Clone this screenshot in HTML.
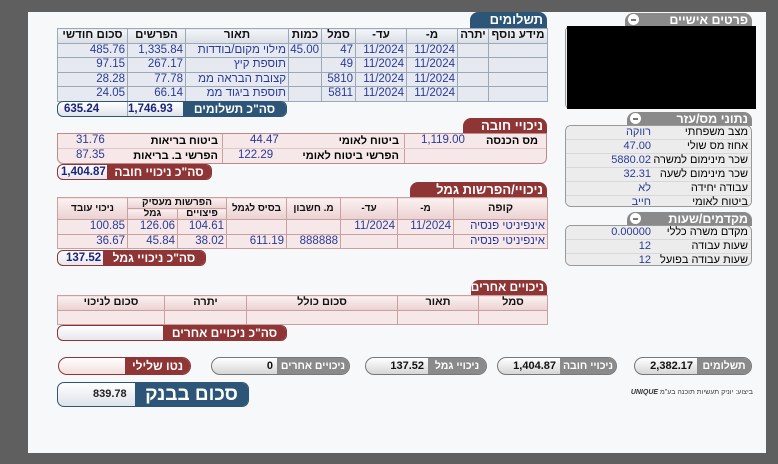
<!DOCTYPE html>
<html dir="ltr"><head><meta charset="utf-8">
<style>
*{margin:0;padding:0;box-sizing:border-box}
body{width:778px;height:464px;background:#5f5f5f;position:relative;overflow:hidden;font-family:"Liberation Sans",Arial,sans-serif;font-size:11px}
.pg{position:absolute;left:28px;top:12px;width:738px;height:441px;background:#f7f8fa}
.a{position:absolute;white-space:nowrap}
.tab{position:absolute;color:#fff;font-weight:bold;font-size:13px;line-height:15px;text-align:right;padding-right:4px;border-radius:8px 8px 0 0;direction:rtl;white-space:nowrap;overflow:hidden}
.blue{background:#2c5577}.red{background:#8f3535}.gray{background:#8a8a8a}
table{position:absolute;border-collapse:collapse;direction:rtl;table-layout:fixed}
td{border:1px solid #9aa8b8;height:14.5px;padding:0 2px;white-space:nowrap;overflow:hidden;font-size:11.5px;line-height:13px}
.bt td{background:#e6eaf0;color:#2a3a9a;text-align:right}
.bt tr:first-child td{background:linear-gradient(#f4f6f8,#d9dee5);color:#111;font-weight:bold;text-align:center}
.rt td{border-color:#c8a0a0;background:#f6e8e8;color:#2a3a9a;text-align:right}
.rt tr.h td{background:linear-gradient(#fbf1f1,#ebd1d1);color:#111;font-weight:bold;text-align:center;font-size:10px}
.box{position:absolute;border-radius:6px;overflow:hidden}
.num{text-align:left;color:#1a237e;font-weight:bold}
.gt td{border:none;border-bottom:1px solid #d8d8d8;background:#ececec;height:13.6px;padding:0 3px;font-size:11px}
.pill{position:absolute;height:18px;border:1px solid #777;border-radius:9px;background:linear-gradient(#fff,#d6d6d6);overflow:hidden}
.pill .l{position:absolute;right:0;top:0;bottom:0;background:#8a8a8a;color:#fff;font-weight:bold;font-size:10.5px;line-height:17px;padding:0 3px;direction:rtl;white-space:nowrap;text-align:center}
.pill .v{position:absolute;top:0;line-height:17px;font-weight:bold;font-size:11px;color:#111;white-space:nowrap}
.mn{display:inline-block;width:11px;height:11px;border-radius:50%;background:#fff;vertical-align:-1px;position:relative}
.mn:after{content:"";position:absolute;left:3px;top:5px;width:5px;height:1.5px;background:#777}
</style></head><body>
<div class="pg"></div>

<!-- payments -->
<div class="tab blue" style="left:470px;top:12px;width:77px;height:16px">תשלומים</div>
<table class="bt" style="left:57px;top:28px;width:490px">
<colgroup><col style="width:59px"><col style="width:31px"><col style="width:51px"><col style="width:51px"><col style="width:34px"><col style="width:33px"><col style="width:103px"><col style="width:58px"><col style="width:70px"></colgroup>
<tr><td>מידע נוסף</td><td>יתרה</td><td>מ-</td><td>עד-</td><td>סמל</td><td>כמות</td><td>תאור</td><td>הפרשים</td><td>סכום חודשי</td></tr>
<tr><td></td><td></td><td>11/2024</td><td>11/2024</td><td>47</td><td>45.00</td><td>מילוי מקום/בודדות</td><td>1,335.84</td><td>485.76</td></tr>
<tr><td></td><td></td><td>11/2024</td><td>11/2024</td><td>49</td><td></td><td>תוספת קיץ</td><td>267.17</td><td>97.15</td></tr>
<tr><td></td><td></td><td>11/2024</td><td>11/2024</td><td>5810</td><td></td><td>קצובת הבראה ממ</td><td>77.78</td><td>28.28</td></tr>
<tr><td></td><td></td><td>11/2024</td><td>11/2024</td><td>5811</td><td></td><td>תוספת ביגוד ממ</td><td>66.14</td><td>24.05</td></tr>
</table>
<div class="box" style="left:57px;top:101px;width:230px;height:16px;border:1px solid #2c5577;background:linear-gradient(#fff,#dfe4ea)">
<div class="a blue" style="right:0;top:0;width:103px;height:16px;color:#fff;font-weight:bold;font-size:12px;line-height:15px;text-align:center;direction:rtl">סה"כ תשלומים</div>
<div class="a num" style="left:70px;top:1px;font-size:11.5px">1,746.93</div>
<div class="a num" style="left:6px;top:1px;font-size:11.5px">635.24</div>
<div class="a" style="left:69px;top:0;width:1px;height:16px;background:#9aa8b8"></div>
</div>

<!-- mandatory -->
<div class="tab red" style="left:463px;top:118px;width:84px;height:16px">ניכויי חובה</div>
<div class="box" style="left:57px;top:133px;width:490px;height:31px;border:1px solid #c08a8a;background:#f6e8e8;border-radius:0 0 6px 6px;direction:rtl">
<div class="a" style="left:164px;top:0;width:1px;height:30px;background:#c8a0a0"></div>
<div class="a" style="left:346px;top:0;width:1px;height:30px;background:#c8a0a0"></div>
<div class="a" style="left:0;top:14px;width:490px;height:1px;background:#e0c8c8"></div>
<div class="a" style="right:8px;top:1px;font-weight:bold">מס הכנסה</div>
<div class="a" style="left:363px;top:0;color:#2a3a9a;font-size:11.5px">1,119.00</div>
<div class="a" style="right:147px;top:1px;font-weight:bold">ביטוח לאומי</div>
<div class="a" style="left:192px;top:0;color:#2a3a9a;font-size:11.5px">44.47</div>
<div class="a" style="right:147px;top:16px;font-weight:bold">הפרשי ביטוח לאומי</div>
<div class="a" style="left:180px;top:15px;color:#2a3a9a;font-size:11.5px">122.29</div>
<div class="a" style="right:328px;top:1px;font-weight:bold">ביטוח בריאות</div>
<div class="a" style="left:18px;top:0;color:#2a3a9a;font-size:11.5px">31.76</div>
<div class="a" style="right:328px;top:16px;font-weight:bold">הפרשי ב. בריאות</div>
<div class="a" style="left:18px;top:15px;color:#2a3a9a;font-size:11.5px">87.35</div>
</div>
<div class="box" style="left:57px;top:164px;width:155px;height:16px;border:1px solid #8f3535;background:linear-gradient(#fff,#e6e6ee)">
<div class="a red" style="right:0;top:0;width:104px;height:16px;color:#fff;font-weight:bold;font-size:12px;line-height:15px;text-align:center;direction:rtl">סה"כ ניכויי חובה</div>
<div class="a num" style="left:3px;top:1px;font-size:11.5px">1,404.87</div>
</div>

<!-- gemel -->
<div class="tab red" style="left:410px;top:182px;width:137px;height:16px">ניכויי/הפרשות גמל</div>
<table class="rt" style="left:57px;top:197px;width:490px">
<colgroup><col style="width:94px"><col style="width:56px"><col style="width:57px"><col style="width:54px"><col style="width:60px"><col style="width:49px"><col style="width:50px"><col style="width:70px"></colgroup>
<tr class="h"><td rowspan="2" style="font-size:11px">קופה</td><td rowspan="2">מ-</td><td rowspan="2">עד-</td><td rowspan="2">מ. חשבון</td><td rowspan="2">בסיס לגמל</td><td colspan="2" style="height:10px;line-height:10px">הפרשות מעסיק</td><td rowspan="2">ניכוי עובד</td></tr>
<tr class="h"><td style="height:10px;line-height:10px">פיצויים</td><td style="height:10px;line-height:10px">גמל</td></tr>
<tr><td>אינפיניטי פנסיה</td><td>11/2024</td><td>11/2024</td><td></td><td></td><td>104.61</td><td>126.06</td><td>100.85</td></tr>
<tr><td>אינפיניטי פנסיה</td><td></td><td></td><td>888888</td><td>611.19</td><td>38.02</td><td>45.84</td><td>36.67</td></tr>
</table>
<div class="box" style="left:57px;top:250px;width:149px;height:16px;border:1px solid #8f3535;background:linear-gradient(#fff,#e6e6ee)">
<div class="a red" style="right:0;top:0;width:102px;height:16px;color:#fff;font-weight:bold;font-size:12px;line-height:15px;text-align:center;direction:rtl">סה"כ ניכויי גמל</div>
<div class="a num" style="left:8px;top:1px;font-size:11.5px">137.52</div>
</div>

<!-- others -->
<div class="tab red" style="left:471px;top:280px;width:76px;height:16px;font-size:12px;padding-right:3px">ניכויים אחרים</div>
<table class="rt" style="left:57px;top:295px;width:490px">
<colgroup><col style="width:69px"><col style="width:81px"><col style="width:151px"><col style="width:82px"><col style="width:107px"></colgroup>
<tr class="h"><td style="font-size:11px">סמל</td><td style="font-size:11px">תאור</td><td style="font-size:11px">סכום כולל</td><td style="font-size:11px">יתרה</td><td style="font-size:11px">סכום לניכוי</td></tr>
<tr><td></td><td></td><td></td><td></td><td></td></tr>
</table>
<div class="box" style="left:57px;top:325px;width:230px;height:16px;border:1px solid #8f3535;background:linear-gradient(#fff,#e6e6ee)">
<div class="a red" style="right:0;top:0;width:123px;height:16px;color:#fff;font-weight:bold;font-size:12px;line-height:15px;text-align:center;direction:rtl">סה"כ ניכויים אחרים</div>
</div>

<!-- right column -->
<div class="tab gray" style="left:625px;top:13px;width:127px;height:14px;line-height:14px;font-size:12.5px;padding-left:3px"><span class="mn" style="position:absolute;left:3px;top:1px"></span>פרטים אישיים</div>
<div class="a" style="left:565px;top:26px;width:188px;height:83px;border:1px solid #999;border-radius:5px;background:#ececec"></div>
<div class="a" style="left:567px;top:26px;width:189px;height:83px;background:#000"></div>

<div class="tab gray" style="left:627px;top:112px;width:125px;height:14px;line-height:14px;font-size:12.5px"><span class="mn" style="position:absolute;left:3px;top:1px"></span>נתוני מס/עזר</div>
<div class="box" style="left:565px;top:125px;width:187px;height:82px;border:1px solid #999;background:#ececec">
<table class="gt" style="left:0;top:0;width:185px;position:absolute">
<colgroup><col style="width:97px"><col style="width:88px"></colgroup>
<tr><td>מצב משפחתי</td><td style="color:#2a3a9a">רווקה</td></tr>
<tr><td>אחוז מס שולי</td><td style="color:#2a3a9a">47.00</td></tr>
<tr><td>שכר מינימום למשרה</td><td style="color:#2a3a9a">5880.02</td></tr>
<tr><td>שכר מינימום לשעה</td><td style="color:#2a3a9a">32.31</td></tr>
<tr><td>עבודה יחידה</td><td style="color:#2a3a9a">לא</td></tr>
<tr><td style="border:none">ביטוח לאומי</td><td style="border:none;color:#2a3a9a">חייב</td></tr>
</table></div>

<div class="tab gray" style="left:627px;top:212px;width:125px;height:14px;line-height:14px;font-size:12.5px"><span class="mn" style="position:absolute;left:3px;top:1px"></span>מקדמים/שעות</div>
<div class="box" style="left:565px;top:225px;width:187px;height:41px;border:1px solid #999;background:#ececec">
<table class="gt" style="left:0;top:0;width:185px;position:absolute">
<colgroup><col style="width:97px"><col style="width:88px"></colgroup>
<tr><td>מקדם משרה כללי</td><td style="color:#2a3a9a">0.00000</td></tr>
<tr><td>שעות עבודה</td><td style="color:#2a3a9a">12</td></tr>
<tr><td style="border:none">שעות עבודה בפועל</td><td style="border:none;color:#2a3a9a">12</td></tr>
</table></div>

<!-- bottom pills -->
<div class="pill" style="left:634px;top:357px;width:118px"><div class="l" style="width:54px">תשלומים</div><div class="v" style="right:58px">2,382.17</div></div>
<div class="pill" style="left:497px;top:357px;width:120px"><div class="l" style="width:56px">ניכויי חובה</div><div class="v" style="right:60px">1,404.87</div></div>
<div class="pill" style="left:365px;top:357px;width:122px"><div class="l" style="width:58px">ניכויי גמל</div><div class="v" style="right:62px">137.52</div></div>
<div class="pill" style="left:211px;top:357px;width:139px"><div class="l" style="width:72px">ניכויים אחרים</div><div class="v" style="right:76px">0</div></div>
<div class="pill" style="left:58px;top:357px;width:133px;border-color:#8f3535;background:linear-gradient(#fff,#f3dede)"><div class="l" style="width:65px;background:#8f3535;font-size:12px">נטו שלילי</div></div>

<div class="box" style="left:57px;top:382px;width:192px;height:25px;border:1px solid #2c5577;border-radius:7px;background:linear-gradient(#fff,#dde3ea)">
<div class="a blue" style="right:0;top:0;width:113px;height:24px;color:#fff;font-weight:bold;font-size:19px;line-height:23px;text-align:center;direction:rtl">סכום בבנק</div>
<div class="a" style="left:35px;top:5px;font-weight:bold;font-size:11px;color:#222">839.78</div>
</div>

<div class="a" style="left:638px;top:389px;width:115px;font-size:7px;color:#444;direction:rtl;text-align:right">ביצוע: יוניק תעשיות תוכנה בע"מ <b style="font-style:italic;color:#333">UNIQUE</b></div>
</body></html>
